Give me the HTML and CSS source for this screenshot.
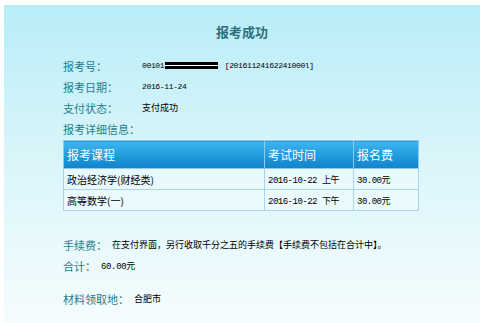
FILE: index.html
```html
<!DOCTYPE html>
<html lang="zh-CN">
<head>
  <meta charset="UTF-8" />
  <title>报考成功</title>
  <link rel="stylesheet" href="styles.css">
</head>
<body>
  <div class="panel">
    <div class="title">报考成功</div>

    <div class="info">
      <div class="row">
        <span class="label">报考号：</span>
        <span class="value mono">00101<span class="redact"></span> [20161124162241000l]</span>
      </div>
      <div class="row">
        <span class="label">报考日期：</span>
        <span class="value mono">2016-11-24</span>
      </div>
      <div class="row">
        <span class="label">支付状态：</span>
        <span class="value">支付成功</span>
      </div>
      <div class="row">
        <span class="label">报考详细信息：</span>
      </div>
    </div>

    <table class="detail">
      <thead>
        <tr>
          <th class="c1">报考课程</th>
          <th class="c2">考试时间</th>
          <th class="c3">报名费</th>
        </tr>
      </thead>
      <tbody>
        <tr>
          <td>政治经济学(财经类)</td>
          <td class="mono">2016-10-22 上午</td>
          <td class="mono">30.00元</td>
        </tr>
        <tr>
          <td>高等数学(一)</td>
          <td class="mono">2016-10-22 下午</td>
          <td class="mono">30.00元</td>
        </tr>
      </tbody>
    </table>

    <div class="summary">
      <div class="row">
        <span class="label">手续费：</span>
        <span class="note">在支付界面，另行收取千分之五的手续费【手续费不包括在合计中】。</span>
      </div>
      <div class="row">
        <span class="label">合计：</span>
        <span class="note mono">60.00元</span>
      </div>
      <div class="row place">
        <span class="label">材料领取地：</span>
        <span class="note">合肥市</span>
      </div>
    </div>
  </div>
</body>
</html>
```

FILE: styles.css
```css
body {
  margin: 0;
  padding: 0;
  background: #fff;
  font-family: "Noto Sans CJK SC", "Noto Sans", sans-serif;
  color: #000;
}
.panel {
  margin: 5px 0 0 4px;
  width: 476px;
  height: 330px;
  padding-left: 59px;
  box-sizing: border-box;
  background: linear-gradient(180deg, #b8edf8 0%, #d9f5fa 45%, #f7fdfe 100%);
}
.title {
  padding-top: 19px;
  margin-left: -59px;
  height: 16px;
  line-height: 16px;
  text-align: center;
  font-size: 13px;
  font-weight: bold;
  color: #2e6f7c;
}
.info {
  margin-top: 15px;
}
.row {
  display: flex;
  align-items: center;
  height: 21px;
}
.label {
  font-size: 11px;
  color: #1f7d8b;
}
.info .label {
  width: 79px;
}
.value {
  font-size: 9px;
}
.mono {
  font-family: "Liberation Mono", "Noto Sans CJK SC", monospace;
}
.value.mono,
.note.mono {
  font-size: 8px;
  letter-spacing: -0.35px;
}
.redact {
  display: inline-block;
  width: 53px;
  height: 7px;
  margin: 0 2px 0 1px;
  vertical-align: -1px;
  background: linear-gradient(180deg, #000 0, #000 3px, #fff 3px, #fff 4px, #000 4px);
}
.detail {
  width: 356px;
  border-collapse: collapse;
  margin-top: 1px;
}
.detail th,
.detail td {
  border: 1px solid #a9d5f1;
  padding: 0 3px;
  text-align: left;
  font-weight: normal;
}
.detail th {
  height: 27px;
  font-size: 12px;
  color: #fff;
  background: linear-gradient(180deg, #3db6f1 0%, #2199dc 55%, #1283cb 100%);
  border-color: #8ccaee;
}
.detail td {
  height: 20px;
  font-size: 10px;
  background: rgba(255, 255, 255, 0.35);
}
.detail td.mono {
  font-size: 9px;
  letter-spacing: -0.5px;
}
.detail .c1 { width: 194px; }
.detail .c2 { width: 82px; }
.summary {
  margin-top: 23px;
}
.summary .note {
  font-size: 9px;
  margin-left: 5px;
}
.summary .place {
  margin-top: 12px;
}
```
